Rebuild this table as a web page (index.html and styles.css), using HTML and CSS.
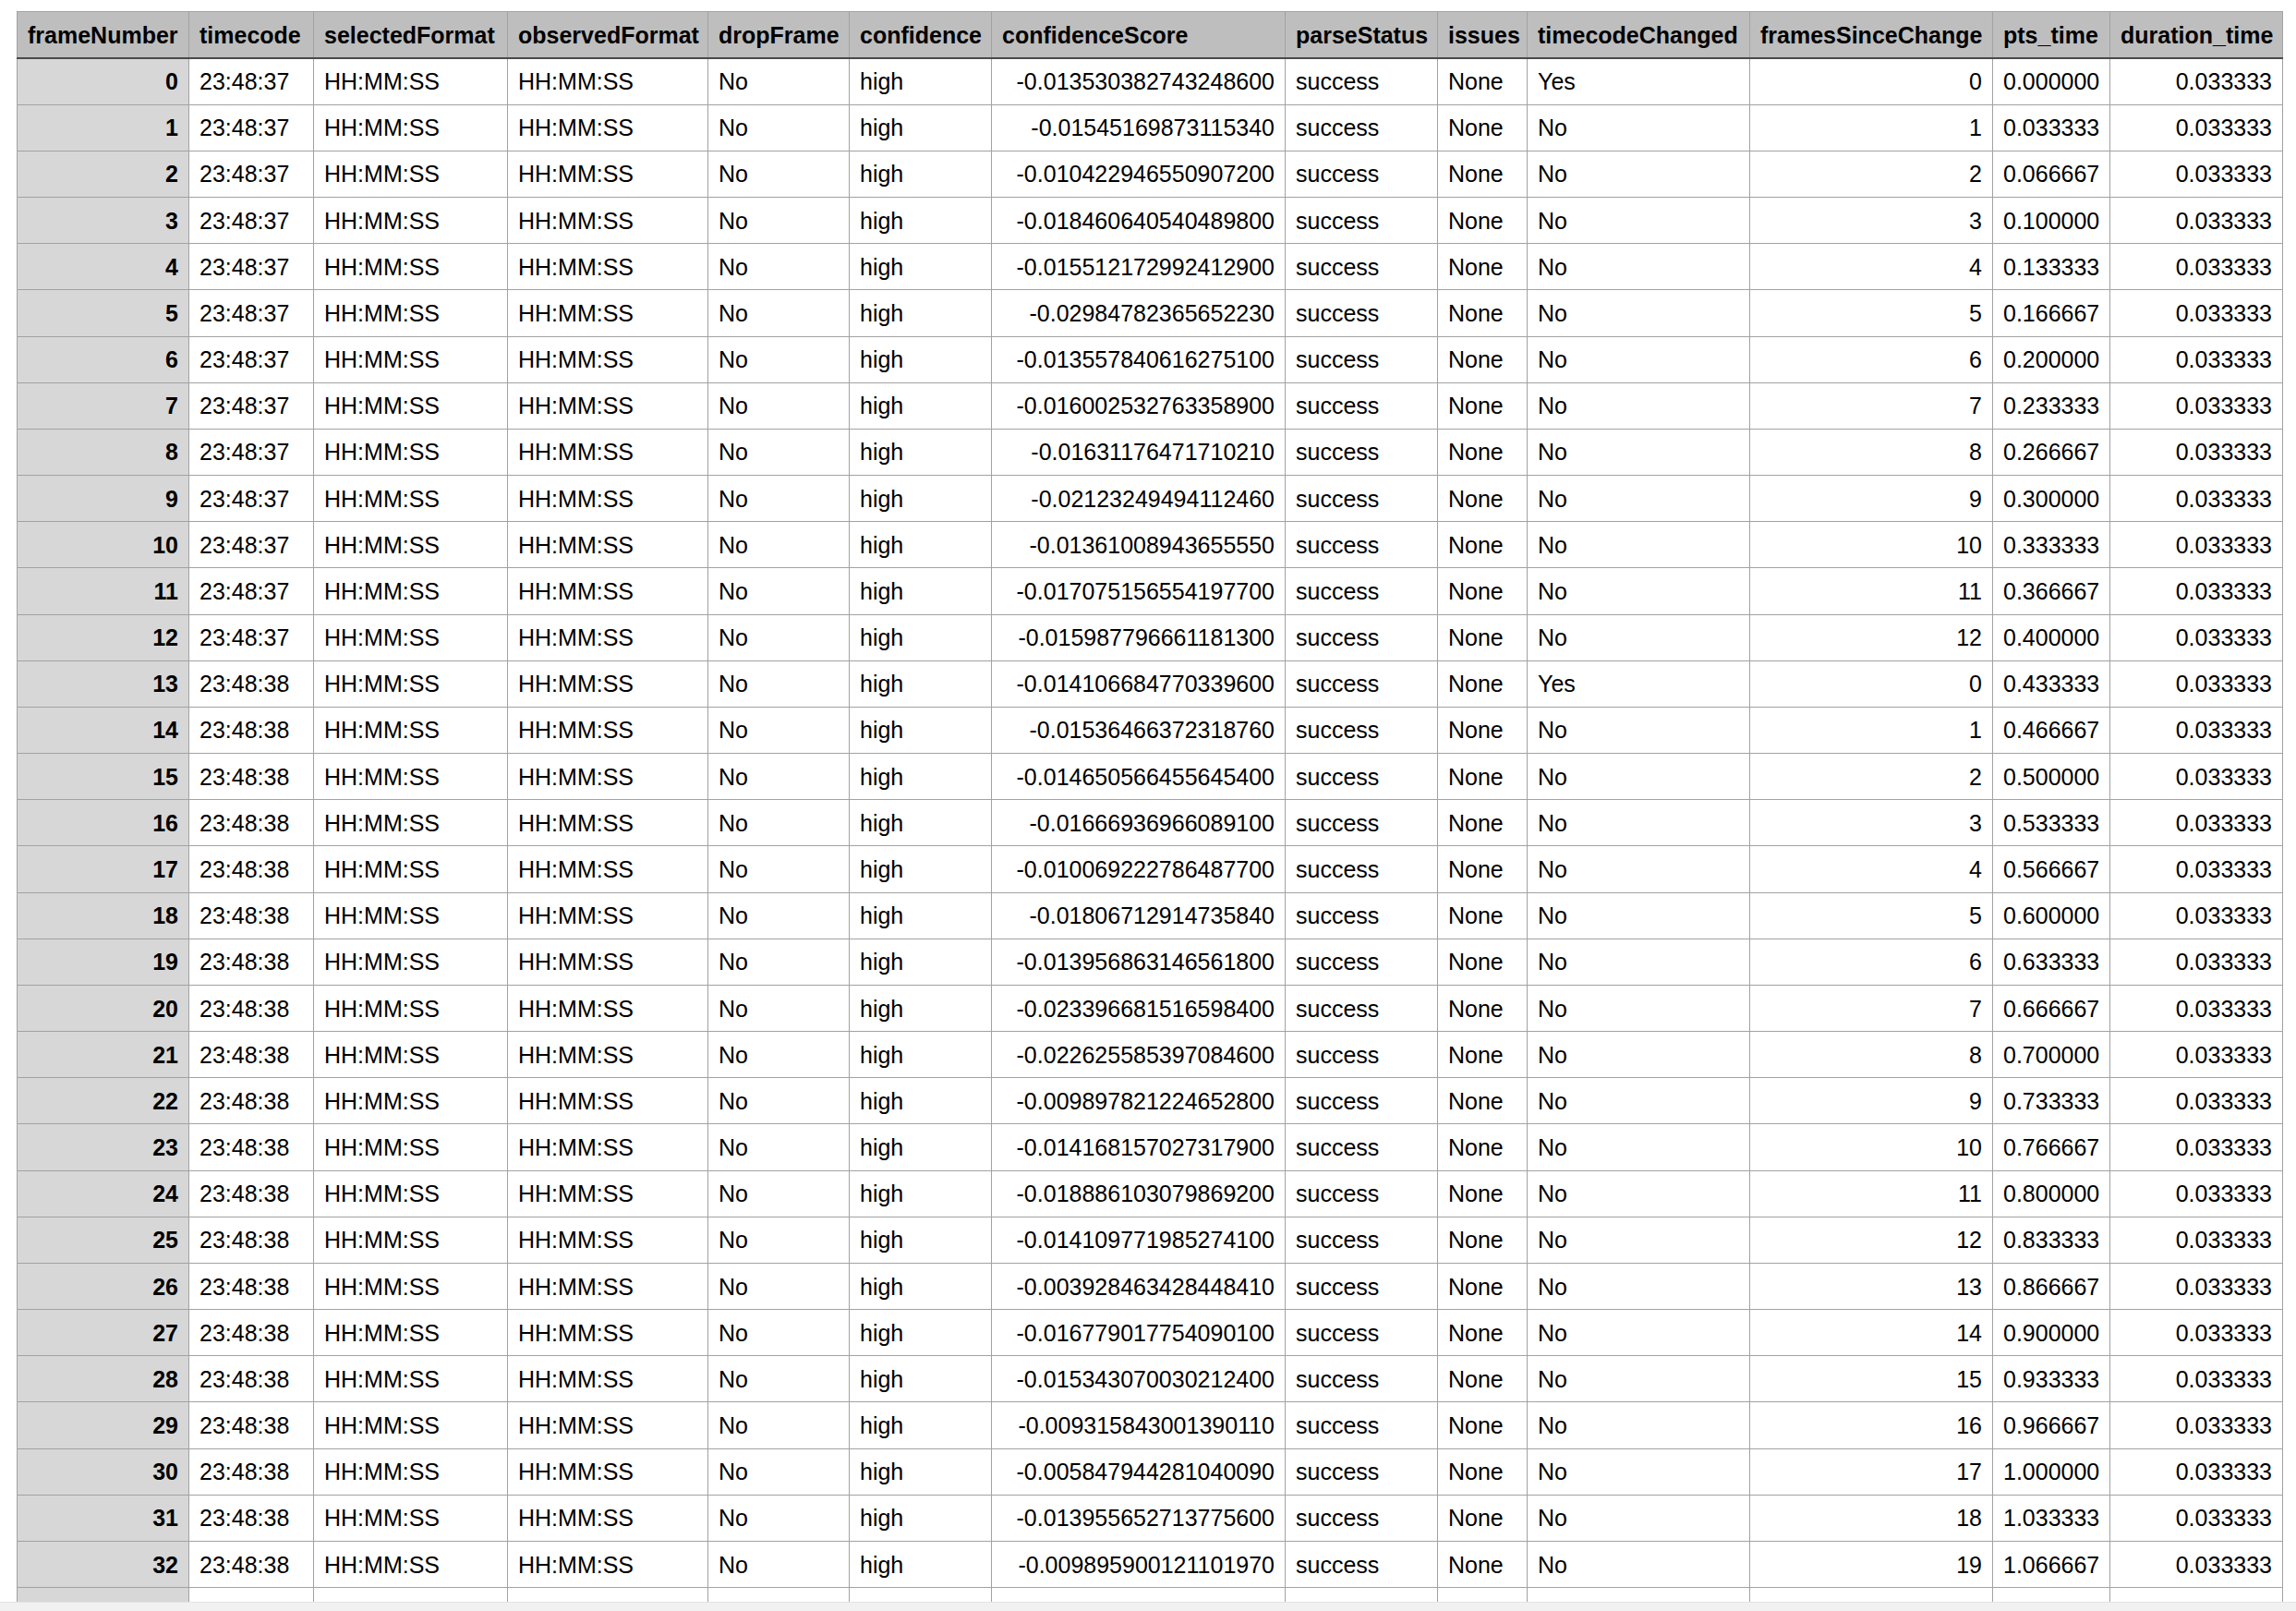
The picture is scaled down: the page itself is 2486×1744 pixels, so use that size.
FILE: index.html
```html
<!DOCTYPE html>
<html lang="en">
<head>
<meta charset="utf-8">
<title>frames</title>
<link rel="stylesheet" href="styles.css">
</head>
<body>
<div class="sheet">
<table class="grid">
<colgroup>
<col class="w-frame"><col class="w-tc"><col class="w-sel"><col class="w-obs"><col class="w-drop"><col class="w-conf"><col class="w-score"><col class="w-parse"><col class="w-iss"><col class="w-chg"><col class="w-since"><col class="w-pts"><col class="w-dur">
</colgroup>
<thead>
<tr><th>frameNumber</th><th>timecode</th><th>selectedFormat</th><th>observedFormat</th><th>dropFrame</th><th>confidence</th><th>confidenceScore</th><th>parseStatus</th><th>issues</th><th>timecodeChanged</th><th>framesSinceChange</th><th>pts_time</th><th>duration_time</th></tr>
</thead>
<tbody>
<tr><td class="idx">0</td><td>23:48:37</td><td>HH:MM:SS</td><td>HH:MM:SS</td><td>No</td><td>high</td><td class="num">-0.013530382743248600</td><td>success</td><td>None</td><td>Yes</td><td class="num">0</td><td class="num">0.000000</td><td class="num">0.033333</td></tr>
<tr><td class="idx">1</td><td>23:48:37</td><td>HH:MM:SS</td><td>HH:MM:SS</td><td>No</td><td>high</td><td class="num">-0.01545169873115340</td><td>success</td><td>None</td><td>No</td><td class="num">1</td><td class="num">0.033333</td><td class="num">0.033333</td></tr>
<tr><td class="idx">2</td><td>23:48:37</td><td>HH:MM:SS</td><td>HH:MM:SS</td><td>No</td><td>high</td><td class="num">-0.010422946550907200</td><td>success</td><td>None</td><td>No</td><td class="num">2</td><td class="num">0.066667</td><td class="num">0.033333</td></tr>
<tr><td class="idx">3</td><td>23:48:37</td><td>HH:MM:SS</td><td>HH:MM:SS</td><td>No</td><td>high</td><td class="num">-0.018460640540489800</td><td>success</td><td>None</td><td>No</td><td class="num">3</td><td class="num">0.100000</td><td class="num">0.033333</td></tr>
<tr><td class="idx">4</td><td>23:48:37</td><td>HH:MM:SS</td><td>HH:MM:SS</td><td>No</td><td>high</td><td class="num">-0.015512172992412900</td><td>success</td><td>None</td><td>No</td><td class="num">4</td><td class="num">0.133333</td><td class="num">0.033333</td></tr>
<tr><td class="idx">5</td><td>23:48:37</td><td>HH:MM:SS</td><td>HH:MM:SS</td><td>No</td><td>high</td><td class="num">-0.02984782365652230</td><td>success</td><td>None</td><td>No</td><td class="num">5</td><td class="num">0.166667</td><td class="num">0.033333</td></tr>
<tr><td class="idx">6</td><td>23:48:37</td><td>HH:MM:SS</td><td>HH:MM:SS</td><td>No</td><td>high</td><td class="num">-0.013557840616275100</td><td>success</td><td>None</td><td>No</td><td class="num">6</td><td class="num">0.200000</td><td class="num">0.033333</td></tr>
<tr><td class="idx">7</td><td>23:48:37</td><td>HH:MM:SS</td><td>HH:MM:SS</td><td>No</td><td>high</td><td class="num">-0.016002532763358900</td><td>success</td><td>None</td><td>No</td><td class="num">7</td><td class="num">0.233333</td><td class="num">0.033333</td></tr>
<tr><td class="idx">8</td><td>23:48:37</td><td>HH:MM:SS</td><td>HH:MM:SS</td><td>No</td><td>high</td><td class="num">-0.01631176471710210</td><td>success</td><td>None</td><td>No</td><td class="num">8</td><td class="num">0.266667</td><td class="num">0.033333</td></tr>
<tr><td class="idx">9</td><td>23:48:37</td><td>HH:MM:SS</td><td>HH:MM:SS</td><td>No</td><td>high</td><td class="num">-0.02123249494112460</td><td>success</td><td>None</td><td>No</td><td class="num">9</td><td class="num">0.300000</td><td class="num">0.033333</td></tr>
<tr><td class="idx">10</td><td>23:48:37</td><td>HH:MM:SS</td><td>HH:MM:SS</td><td>No</td><td>high</td><td class="num">-0.01361008943655550</td><td>success</td><td>None</td><td>No</td><td class="num">10</td><td class="num">0.333333</td><td class="num">0.033333</td></tr>
<tr><td class="idx">11</td><td>23:48:37</td><td>HH:MM:SS</td><td>HH:MM:SS</td><td>No</td><td>high</td><td class="num">-0.017075156554197700</td><td>success</td><td>None</td><td>No</td><td class="num">11</td><td class="num">0.366667</td><td class="num">0.033333</td></tr>
<tr><td class="idx">12</td><td>23:48:37</td><td>HH:MM:SS</td><td>HH:MM:SS</td><td>No</td><td>high</td><td class="num">-0.015987796661181300</td><td>success</td><td>None</td><td>No</td><td class="num">12</td><td class="num">0.400000</td><td class="num">0.033333</td></tr>
<tr><td class="idx">13</td><td>23:48:38</td><td>HH:MM:SS</td><td>HH:MM:SS</td><td>No</td><td>high</td><td class="num">-0.014106684770339600</td><td>success</td><td>None</td><td>Yes</td><td class="num">0</td><td class="num">0.433333</td><td class="num">0.033333</td></tr>
<tr><td class="idx">14</td><td>23:48:38</td><td>HH:MM:SS</td><td>HH:MM:SS</td><td>No</td><td>high</td><td class="num">-0.01536466372318760</td><td>success</td><td>None</td><td>No</td><td class="num">1</td><td class="num">0.466667</td><td class="num">0.033333</td></tr>
<tr><td class="idx">15</td><td>23:48:38</td><td>HH:MM:SS</td><td>HH:MM:SS</td><td>No</td><td>high</td><td class="num">-0.014650566455645400</td><td>success</td><td>None</td><td>No</td><td class="num">2</td><td class="num">0.500000</td><td class="num">0.033333</td></tr>
<tr><td class="idx">16</td><td>23:48:38</td><td>HH:MM:SS</td><td>HH:MM:SS</td><td>No</td><td>high</td><td class="num">-0.01666936966089100</td><td>success</td><td>None</td><td>No</td><td class="num">3</td><td class="num">0.533333</td><td class="num">0.033333</td></tr>
<tr><td class="idx">17</td><td>23:48:38</td><td>HH:MM:SS</td><td>HH:MM:SS</td><td>No</td><td>high</td><td class="num">-0.010069222786487700</td><td>success</td><td>None</td><td>No</td><td class="num">4</td><td class="num">0.566667</td><td class="num">0.033333</td></tr>
<tr><td class="idx">18</td><td>23:48:38</td><td>HH:MM:SS</td><td>HH:MM:SS</td><td>No</td><td>high</td><td class="num">-0.01806712914735840</td><td>success</td><td>None</td><td>No</td><td class="num">5</td><td class="num">0.600000</td><td class="num">0.033333</td></tr>
<tr><td class="idx">19</td><td>23:48:38</td><td>HH:MM:SS</td><td>HH:MM:SS</td><td>No</td><td>high</td><td class="num">-0.013956863146561800</td><td>success</td><td>None</td><td>No</td><td class="num">6</td><td class="num">0.633333</td><td class="num">0.033333</td></tr>
<tr><td class="idx">20</td><td>23:48:38</td><td>HH:MM:SS</td><td>HH:MM:SS</td><td>No</td><td>high</td><td class="num">-0.023396681516598400</td><td>success</td><td>None</td><td>No</td><td class="num">7</td><td class="num">0.666667</td><td class="num">0.033333</td></tr>
<tr><td class="idx">21</td><td>23:48:38</td><td>HH:MM:SS</td><td>HH:MM:SS</td><td>No</td><td>high</td><td class="num">-0.022625585397084600</td><td>success</td><td>None</td><td>No</td><td class="num">8</td><td class="num">0.700000</td><td class="num">0.033333</td></tr>
<tr><td class="idx">22</td><td>23:48:38</td><td>HH:MM:SS</td><td>HH:MM:SS</td><td>No</td><td>high</td><td class="num">-0.009897821224652800</td><td>success</td><td>None</td><td>No</td><td class="num">9</td><td class="num">0.733333</td><td class="num">0.033333</td></tr>
<tr><td class="idx">23</td><td>23:48:38</td><td>HH:MM:SS</td><td>HH:MM:SS</td><td>No</td><td>high</td><td class="num">-0.014168157027317900</td><td>success</td><td>None</td><td>No</td><td class="num">10</td><td class="num">0.766667</td><td class="num">0.033333</td></tr>
<tr><td class="idx">24</td><td>23:48:38</td><td>HH:MM:SS</td><td>HH:MM:SS</td><td>No</td><td>high</td><td class="num">-0.018886103079869200</td><td>success</td><td>None</td><td>No</td><td class="num">11</td><td class="num">0.800000</td><td class="num">0.033333</td></tr>
<tr><td class="idx">25</td><td>23:48:38</td><td>HH:MM:SS</td><td>HH:MM:SS</td><td>No</td><td>high</td><td class="num">-0.014109771985274100</td><td>success</td><td>None</td><td>No</td><td class="num">12</td><td class="num">0.833333</td><td class="num">0.033333</td></tr>
<tr><td class="idx">26</td><td>23:48:38</td><td>HH:MM:SS</td><td>HH:MM:SS</td><td>No</td><td>high</td><td class="num">-0.003928463428448410</td><td>success</td><td>None</td><td>No</td><td class="num">13</td><td class="num">0.866667</td><td class="num">0.033333</td></tr>
<tr><td class="idx">27</td><td>23:48:38</td><td>HH:MM:SS</td><td>HH:MM:SS</td><td>No</td><td>high</td><td class="num">-0.016779017754090100</td><td>success</td><td>None</td><td>No</td><td class="num">14</td><td class="num">0.900000</td><td class="num">0.033333</td></tr>
<tr><td class="idx">28</td><td>23:48:38</td><td>HH:MM:SS</td><td>HH:MM:SS</td><td>No</td><td>high</td><td class="num">-0.015343070030212400</td><td>success</td><td>None</td><td>No</td><td class="num">15</td><td class="num">0.933333</td><td class="num">0.033333</td></tr>
<tr><td class="idx">29</td><td>23:48:38</td><td>HH:MM:SS</td><td>HH:MM:SS</td><td>No</td><td>high</td><td class="num">-0.009315843001390110</td><td>success</td><td>None</td><td>No</td><td class="num">16</td><td class="num">0.966667</td><td class="num">0.033333</td></tr>
<tr><td class="idx">30</td><td>23:48:38</td><td>HH:MM:SS</td><td>HH:MM:SS</td><td>No</td><td>high</td><td class="num">-0.005847944281040090</td><td>success</td><td>None</td><td>No</td><td class="num">17</td><td class="num">1.000000</td><td class="num">0.033333</td></tr>
<tr><td class="idx">31</td><td>23:48:38</td><td>HH:MM:SS</td><td>HH:MM:SS</td><td>No</td><td>high</td><td class="num">-0.013955652713775600</td><td>success</td><td>None</td><td>No</td><td class="num">18</td><td class="num">1.033333</td><td class="num">0.033333</td></tr>
<tr><td class="idx">32</td><td>23:48:38</td><td>HH:MM:SS</td><td>HH:MM:SS</td><td>No</td><td>high</td><td class="num">-0.009895900121101970</td><td>success</td><td>None</td><td>No</td><td class="num">19</td><td class="num">1.066667</td><td class="num">0.033333</td></tr>
<tr><td class="idx">33</td><td>23:48:38</td><td>HH:MM:SS</td><td>HH:MM:SS</td><td>No</td><td>high</td><td class="num">-0.017301652078038300</td><td>success</td><td>None</td><td>No</td><td class="num">20</td><td class="num">1.100000</td><td class="num">0.033333</td></tr>
</tbody>
</table>
</div>
<div class="bottom-bar"></div>
</body>
</html>
```
FILE: styles.css
```css
html, body {
  margin: 0;
  padding: 0;
  background: #ffffff;
}

body {
  height: 100vh;
  display: flex;
  flex-direction: column;
  overflow: hidden;
  font-family: "Liberation Sans", Arial, Helvetica, sans-serif;
  color: #000000;
}

.sheet {
  flex: 1;
  min-height: 0;
  overflow: hidden;
  padding: 12px 0 0 18px;
}

.bottom-bar {
  flex: 0 0 9px;
  background: #f1f1f1;
  border-top: 1px solid #e4e4e4;
}

.grid {
  border-collapse: collapse;
  table-layout: fixed;
  width: 2454px;
  font-size: 25px;
  line-height: 1;
}

.w-frame { width: 186px; }
.w-tc { width: 135px; }
.w-sel { width: 210px; }
.w-obs { width: 217px; }
.w-drop { width: 153px; }
.w-conf { width: 154px; }
.w-score { width: 318px; }
.w-parse { width: 165px; }
.w-iss { width: 97px; }
.w-chg { width: 241px; }
.w-since { width: 263px; }
.w-pts { width: 127px; }
.w-dur { width: 187px; }

.grid th,
.grid td {
  border: 1px solid #a2a2a2;
  padding: 0 11px;
  white-space: nowrap;
  overflow: hidden;
  text-align: left;
  vertical-align: middle;
}

.grid thead th {
  height: 48px;
  background: #bebebe;
  font-weight: bold;
  border-bottom: 2px solid #4a4a4a;
  padding-top: 1px;
}

.grid tbody td {
  height: 50.18px;
  padding-top: 1px;
  box-sizing: border-box;
}

.grid td.num {
  text-align: right;
}

.grid td.idx {
  background: #d7d7d7;
  font-weight: bold;
  text-align: right;
}
```
